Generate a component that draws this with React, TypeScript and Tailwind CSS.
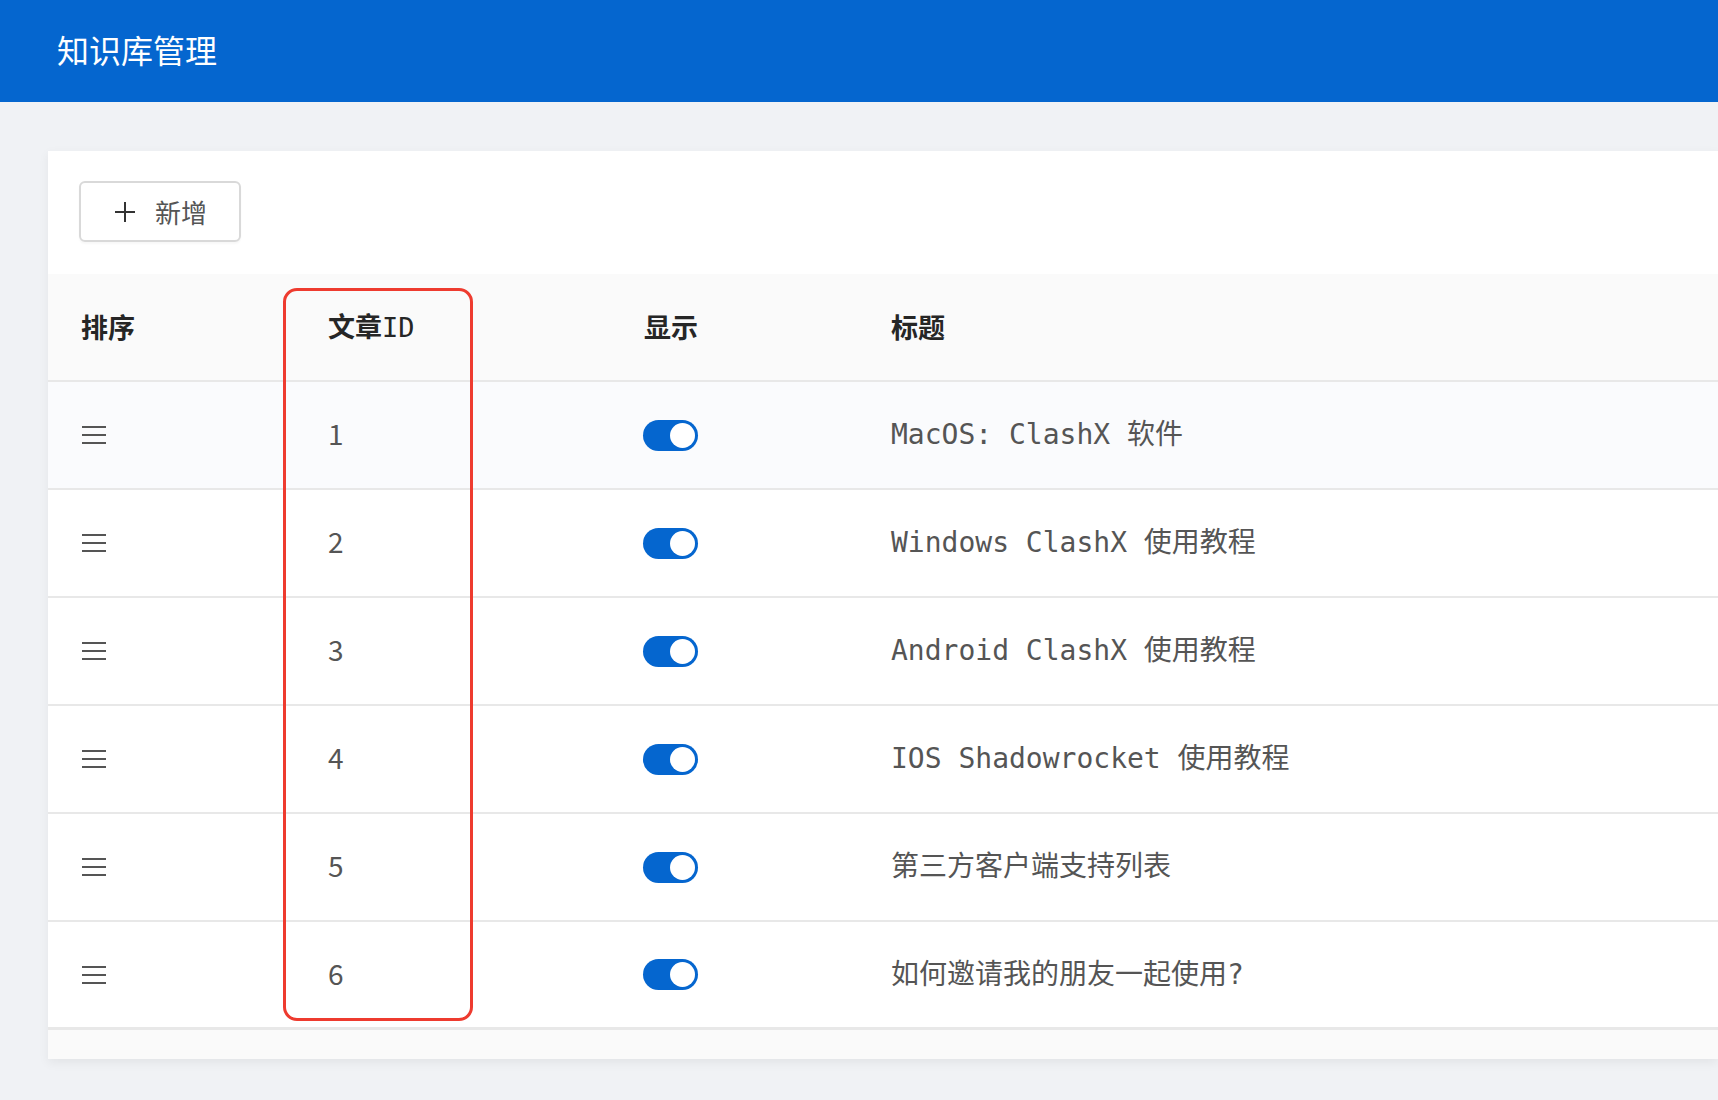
import React, { useState } from 'react';

interface Article {
  id: number;
  title: string;
  visible: boolean;
}

const articles: Article[] = [
  { id: 1, title: 'MacOS: ClashX 软件', visible: true },
  { id: 2, title: 'Windows ClashX 使用教程', visible: true },
  { id: 3, title: 'Android ClashX 使用教程', visible: true },
  { id: 4, title: 'IOS Shadowrocket 使用教程', visible: true },
  { id: 5, title: '第三方客户端支持列表', visible: true },
  { id: 6, title: '如何邀请我的朋友一起使用?', visible: true },
];

function DragHandle() {
  return (
    <svg width="26" height="22" viewBox="0 0 26 22" className="text-[#555]">
      <path d="M1 3h24M1 11h24M1 19h24" stroke="currentColor" strokeWidth="2" />
    </svg>
  );
}

function Toggle({ on }: { on: boolean }) {
  return (
    <div
      className={`w-[55px] h-[31px] rounded-full flex items-center px-[3px] ${
        on ? 'bg-[#0566cf] justify-end' : 'bg-[#bfbfbf] justify-start'
      }`}
    >
      <div className="w-[25px] h-[25px] rounded-full bg-white" />
    </div>
  );
}

export default function App() {
  const [rows] = useState(articles);

  return (
    <div className="min-h-screen bg-[#f0f2f5] overflow-hidden font-['Noto_Sans_CJK_SC',sans-serif]">
      <header className="h-[102px] bg-[#0566cf] flex items-center pl-[57px] pb-[4px]">
        <h1 className="text-white text-[32px] font-normal">知识库管理</h1>
      </header>

      <main className="pt-[48px] pl-[48px]">
        <div className="bg-white shadow-[0_4px_10px_rgba(0,0,0,0.06)] border-t border-[#eef0f3]">
          <div className="px-[31px] pt-[30px] pb-[32px]">
            <button className="h-[61px] w-[162px] border-2 border-[#d9d9d9] rounded-[6px] flex items-center justify-center gap-[18px] text-[#555] text-[26px] shadow-[0_2px_2px_rgba(0,0,0,0.03)]">
              <svg width="24" height="24" viewBox="0 0 24 24">
                <path d="M12 2v20M2 12h20" stroke="#333" strokeWidth="2" />
              </svg>
              <span>新增</span>
            </button>
          </div>

          <div className="relative">
            <div className="flex h-[108px] items-center bg-[#fafafa] border-b-2 border-[#e8e8e8] text-[27px] font-semibold text-[#262626]">
              <div className="w-[247px] pl-[33px]">排序</div>
              <div className="w-[316px] pl-[33px]">
                文章<span className="font-['DejaVu_Sans_Mono',monospace] font-normal">ID</span>
              </div>
              <div className="w-[247px] pl-[33px]">显示</div>
              <div className="flex-1 pl-[33px]">标题</div>
            </div>

            {rows.map((row, i) => (
              <div
                key={row.id}
                className={`flex h-[108px] items-center ${
                  i === rows.length - 1 ? 'border-b-[3px]' : 'border-b-2'
                } border-[#e8e8e8] ${i === 0 ? 'bg-[#fafbfd]' : 'bg-white'}`}
              >
                <div className="w-[247px] pl-[33px] flex items-center">
                  <DragHandle />
                </div>
                <div className="w-[316px] pl-[33px] pb-[4px] text-[28px] text-[#555]">{row.id}</div>
                <div className="w-[247px] pl-[32px]">
                  <Toggle on={row.visible} />
                </div>
                <div className="flex-1 pl-[33px] text-[28px] text-[#555] font-['DejaVu_Sans_Mono','Noto_Sans_CJK_SC',monospace] whitespace-pre">
                  {row.title}
                </div>
              </div>
            ))}

            <div className="h-[29px] bg-[#fafafa]" />

            {/* highlight annotation */}
            <div className="absolute left-[235px] top-[14px] w-[190px] h-[733px] border-[3px] border-[#ee3b2f] rounded-[14px] pointer-events-none" />
          </div>
        </div>
      </main>
    </div>
  );
}
